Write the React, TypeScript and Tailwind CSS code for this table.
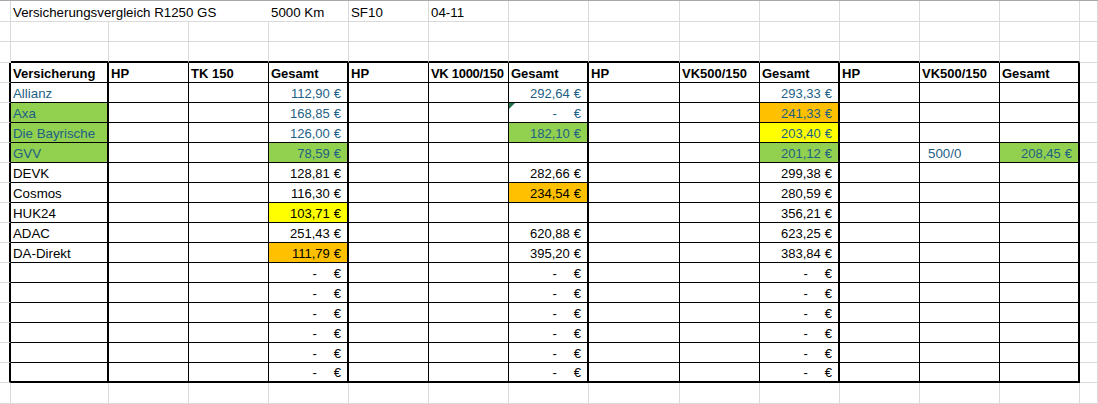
import React from "react";

type Cell = {
  text?: string;
  num?: string; // accounting number, "-" for empty
  bg?: string;
  color?: string;
  bold?: boolean;
  triangle?: boolean;
  indent?: boolean;
  tight?: boolean;
};

const W = [
  "w-[11px]",
  "w-[98px]",
  "w-[80px]",
  "w-[80px]",
  "w-[80px]",
  "w-[80px]",
  "w-[80px]",
  "w-[80px]",
  "w-[91px]",
  "w-[80px]",
  "w-[80px]",
  "w-[80px]",
  "w-[80px]",
  "w-[80px]",
  "w-[18px]",
];

const THICK = new Set([1, 4, 7, 10, 13]);

const BLUE = "text-[#1d5f85]";
const GREEN = "bg-[#92d050]";
const YELLOW = "bg-[#ffff00]";
const ORANGE = "bg-[#ffc000]";

const headers = [
  "Versicherung",
  "HP",
  "TK 150",
  "Gesamt",
  "HP",
  "VK 1000/150",
  "Gesamt",
  "HP",
  "VK500/150",
  "Gesamt",
  "HP",
  "VK500/150",
  "Gesamt",
];

type RowDef = { [k: number]: Cell };

const dataRows: RowDef[] = [
  {
    1: { text: "Allianz", color: BLUE },
    4: { num: "112,90", color: BLUE },
    7: { num: "292,64", color: BLUE },
    10: { num: "293,33", color: BLUE },
  },
  {
    1: { text: "Axa", color: BLUE, bg: GREEN },
    4: { num: "168,85", color: BLUE },
    7: { num: "-", color: BLUE, triangle: true },
    10: { num: "241,33", color: BLUE, bg: ORANGE },
  },
  {
    1: { text: "Die Bayrische", color: BLUE, bg: GREEN },
    4: { num: "126,00", color: BLUE },
    7: { num: "182,10", color: BLUE, bg: GREEN },
    10: { num: "203,40", color: BLUE, bg: YELLOW },
  },
  {
    1: { text: "GVV", color: BLUE, bg: GREEN },
    4: { num: "78,59", color: BLUE, bg: GREEN },
    10: { num: "201,12", color: BLUE, bg: GREEN },
    12: { text: "500/0", color: BLUE, indent: true },
    13: { num: "208,45", color: BLUE, bg: GREEN },
  },
  {
    1: { text: "DEVK" },
    4: { num: "128,81" },
    7: { num: "282,66" },
    10: { num: "299,38" },
  },
  {
    1: { text: "Cosmos" },
    4: { num: "116,30" },
    7: { num: "234,54", bg: ORANGE },
    10: { num: "280,59" },
  },
  {
    1: { text: "HUK24" },
    4: { num: "103,71", bg: YELLOW },
    10: { num: "356,21" },
  },
  {
    1: { text: "ADAC" },
    4: { num: "251,43" },
    7: { num: "620,88" },
    10: { num: "623,25" },
  },
  {
    1: { text: "DA-Direkt" },
    4: { num: "111,79", bg: ORANGE },
    7: { num: "395,20" },
    10: { num: "383,84" },
  },
];

for (let i = 0; i < 6; i++) {
  dataRows.push({ 4: { num: "-" }, 7: { num: "-" }, 10: { num: "-" } });
}

const FONT = "font-['Liberation_Sans',Arial,sans-serif]";

function Content({ c }: { c?: Cell }) {
  if (!c) return null;
  const color = c.color ?? "text-black";
  if (c.num !== undefined) {
    return (
      <div
        className={`flex w-full justify-end items-end pr-[6px] text-[13px] leading-[16px] ${color}`}
      >
        {c.num === "-" ? (
          <span className="mr-[17px]">-</span>
        ) : (
          <span className="mr-[4px]">{c.num}</span>
        )}
        <span>€</span>
      </div>
    );
  }
  return (
    <div
      className={`w-full whitespace-nowrap leading-[16px] ${
        c.indent ? "pl-[8px]" : "pl-[2px]"
      } ${c.bold ? "font-bold text-[13px]" : "text-[13.3px]"} ${
        c.tight ? "tracking-[-0.3px]" : ""
      } ${color}`}
    >
      {c.text}
    </div>
  );
}

function GridRow({
  kind,
  cells,
  h,
  noRight,
}: {
  kind: "plain" | "pre" | "table" | "last";
  cells?: { [k: number]: Cell };
  h: string;
  noRight?: number[];
}) {
  return (
    <div className={`flex ${h}`}>
      {W.map((w, i) => {
        const c = cells?.[i];
        let border = "border-r border-b border-[#dadada]";
        if (kind === "plain" && noRight?.includes(i)) {
          border = "border-b border-[#dadada]";
        }
        if (kind === "pre" && i >= 1 && i <= 13) {
          border = "border-r border-r-[#dadada] border-b-2 border-b-black";
        }
        if ((kind === "table" || kind === "last") && i === 0) {
          border = "border-b border-b-[#dadada] border-r-2 border-r-black";
        }
        if ((kind === "table" || kind === "last") && i >= 1 && i <= 13) {
          const r = THICK.has(i) ? "border-r-2" : "border-r";
          const b = kind === "last" ? "border-b-2" : "border-b";
          border = `${r} ${b} border-black`;
        }
        return (
          <div
            key={i}
            className={`relative box-border flex shrink-0 items-end overflow-visible ${w} ${border} ${
              c?.bg ?? ""
            }`}
          >
            {c?.triangle && (
              <svg
                className="absolute left-0 top-0"
                width="6"
                height="6"
                viewBox="0 0 6 6"
              >
                <polygon points="0,0 6,0 0,6" fill="#217346" />
              </svg>
            )}
            <Content c={c} />
          </div>
        );
      })}
    </div>
  );
}

export default function App() {
  const headerCells: { [k: number]: Cell } = {};
  headers.forEach((t, i) => {
    headerCells[i + 1] = { text: t, bold: true, tight: t === "VK 1000/150" };
  });

  const topCells: { [k: number]: Cell } = {
    1: { text: "Versicherungsvergleich R1250 GS" },
    4: { text: "5000 Km" },
    5: { text: "SF10" },
    6: { text: "04-11" },
  };

  return (
    <div className={`w-[1098px] h-[404px] overflow-hidden bg-white ${FONT}`}>
      <div className="h-px bg-[#a8a8a8]" />
      <GridRow kind="plain" cells={topCells} h="h-[21px]" noRight={[1, 2, 3]} />
      <GridRow kind="plain" h="h-[20px]" />
      <GridRow kind="pre" h="h-[21px]" />
      <GridRow kind="table" cells={headerCells} h="h-[20px]" />
      {dataRows.map((r, idx) => (
        <GridRow
          key={idx}
          kind={idx === dataRows.length - 1 ? "last" : "table"}
          cells={r}
          h="h-[20px]"
        />
      ))}
      <GridRow kind="plain" h="h-[21px]" />
    </div>
  );
}
